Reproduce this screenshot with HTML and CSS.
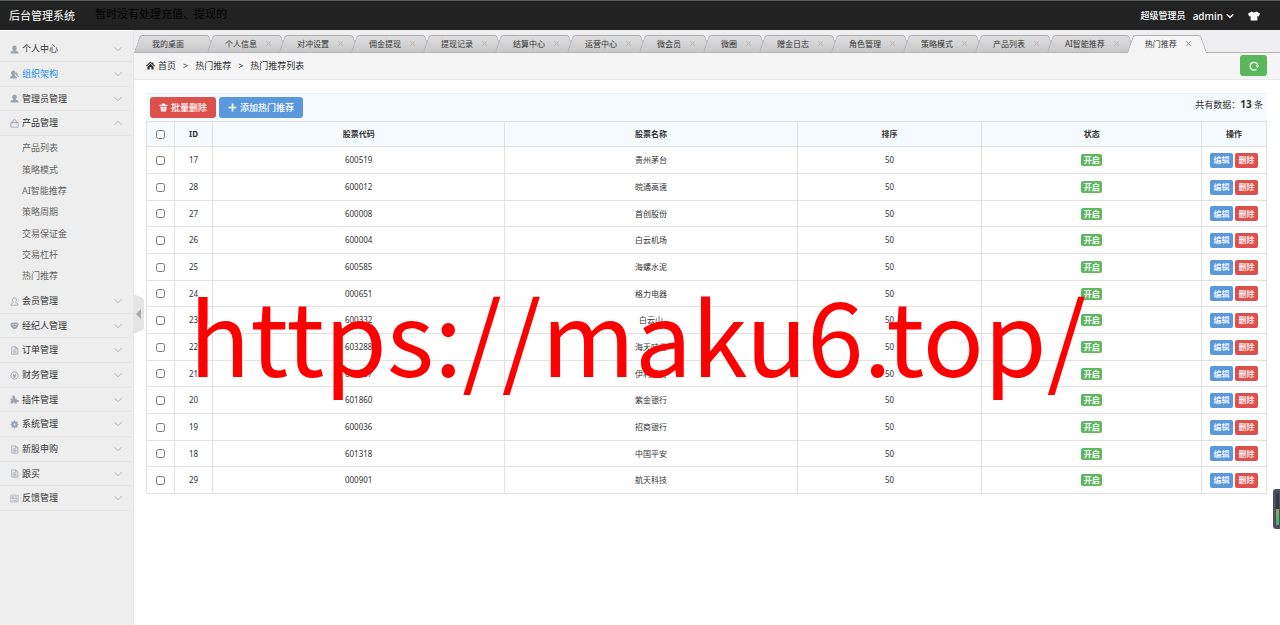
FILE: index.html
```html
<!DOCTYPE html>
<html lang="zh-CN">
<head>
<meta charset="utf-8">
<title>后台管理系统</title>
<link rel="stylesheet" href="styles.css">
</head>
<body>
<svg class="defs" aria-hidden="true">
  <symbol id="user" viewBox="0 0 16 16"><path d="M8 1c2.400 0 4 1.700 4 4.200 0 1.700-.8 3.200-2 4 .2 1 5 1.300 5 4.300V15H1v-1.500c0-3 4.800-3.300 5-4.300-1.200-.8-2-2.300-2-4C4 2.700 5.600 1 8 1z" fill="currentColor"/></symbol>
  <symbol id="team" viewBox="0 0 16 16"><path d="M6 1c2.400 0 4 1.700 4 4.200 0 1.700-.8 3.200-2 4 .2 1 4 1.300 4 4.300V15H0v-1.500c0-3 3.800-3.300 4-4.300-1.200-.8-2-2.300-2-4C2 2.700 3.600 1 6 1zM11 4a4 4 0 0 1 1.500 6.500L10 9zM13 9l3 2-2 2z" fill="currentColor"/></symbol>
  <symbol id="member" viewBox="0 0 16 16"><path d="M8 1.500c2 0 3.500 1.500 3.500 3.700 0 1.900-.9 3.200-2 4 0 1.500 5 1 5 5.300h-13c0-4.300 5-3.800 5-5.300-1.100-.8-2-2.100-2-4C4.500 3 6 1.500 8 1.500z" fill="none" stroke="currentColor" stroke-width="1.500"/></symbol>
  <symbol id="bag" viewBox="0 0 16 16"><path d="M1.500 6h13v8.500h-13zM5 8.500V4a3 3 0 0 1 6 0v4.500" fill="none" stroke="currentColor" stroke-width="1.500"/></symbol>
  <symbol id="broker" viewBox="0 0 16 16"><path d="M1 4q7-3 14 0v3c-1 4-3 7-7 7s-6-3-7-7z" fill="currentColor"/><path d="M3 6.500h4M9 6.500h4M6 10h4" stroke="#eee" stroke-width="1.200"/></symbol>
  <symbol id="doc" viewBox="0 0 16 16"><path d="M3 1.500h7l4 3.500v9.500H3zM10 1.500V5h4M5.500 7h5M5.500 9.500h6M5.500 12h6" fill="none" stroke="currentColor" stroke-width="1.400"/></symbol>
  <symbol id="coin" viewBox="0 0 16 16"><path d="M8 1.500a6.500 6.500 0 1 0 .1 0zM5 4.500l3 3.500 3-3.500M8 8v4.500M5 8h6M5 10.500h6" fill="none" stroke="currentColor" stroke-width="1.500"/></symbol>
  <symbol id="plugin" viewBox="0 0 16 16"><path d="M5 6c-2-3 0-5 1.500-5S10 3 8.500 6H12v3c3-1 4 .5 4 2s-2 2.500-4 1.500V15H8c.5-3-3-3-2.500 0H1v-4c2 0 2-2 0-2V6z" fill="currentColor"/></symbol>
  <symbol id="gear" viewBox="0 0 16 16"><path d="M8 1v14M1 8h14M3 3l10 10M13 3L3 13" stroke="currentColor" stroke-width="2.400"/><circle cx="8" cy="8" r="3.500" fill="#eee" stroke="currentColor" stroke-width="3.600"/></symbol>
  <symbol id="news" viewBox="0 0 16 16"><path d="M1.500 2h13v12h-13zM4 5h3v3H4zM9 5h3.500M9 8h3.500M4 11h8.500" fill="none" stroke="currentColor" stroke-width="1.300"/></symbol>
  <symbol id="down" viewBox="0 0 16 16"><path d="M1 4.500l7 7 7-7" fill="none" stroke="currentColor" stroke-width="2"/></symbol>
  <symbol id="caret" viewBox="0 0 16 16"><path d="M1.500 4.500l6.500 6.500 6.500-6.500" fill="none" stroke="currentColor" stroke-width="3"/></symbol>
  <symbol id="up" viewBox="0 0 16 16"><path d="M1 11.500l7-7 7 7" fill="none" stroke="currentColor" stroke-width="2"/></symbol>
  <symbol id="home" viewBox="0 0 16 16"><path d="M8 1L0 8.500l1.200 1.200L8 3.500l6.800 6.200L16 8.500l-3-2.800V2.500h-2v1.300zM2.500 10L8 5l5.500 5v5H9.500v-4h-3v4h-4z" fill="currentColor"/></symbol>
  <symbol id="trash" viewBox="0 0 16 16"><path d="M5.500 1h5v2H15v2.500H1V3h4.500zM2.500 6.500h11L12.500 15h-9z" fill="currentColor"/><path d="M6 8v5M8 8v5M10 8v5" stroke="#dd514c" stroke-width=".6"/></symbol>
  <symbol id="plus" viewBox="0 0 16 16"><path d="M8 1v14M1 8h14" stroke="currentColor" stroke-width="3"/></symbol>
  <symbol id="shirt" viewBox="0 0 16 16"><path d="M5 2q3 2.500 6 0l5 2.500L14.500 8.500 12.500 8v6h-9V8l-2 .5L0 4.500z" fill="currentColor"/></symbol>
  <symbol id="refresh" viewBox="0 0 16 16"><path d="M12 13A6.200 6.200 0 1 1 14 7" fill="none" stroke="currentColor" stroke-width="2"/><path d="M10.500 7H16l-2.300 4z" fill="currentColor"/></symbol>
  <symbol id="close" viewBox="0 0 16 16"><path d="M3 3l10 10M13 3L3 13" stroke="currentColor" stroke-width="2.200"/></symbol>
</svg>

<header class="topbar">
  <a class="brand" href="#">后台管理系统</a>
  <span class="notice">暂时没有处理充值、提现的</span>
  <div class="account">
    <span>超级管理员</span>
    <button class="plain" type="button">admin <svg class="i8"><use href="#caret"/></svg></button>
    <button class="plain skin" type="button" aria-label="换肤"><svg class="i12"><use href="#shirt"/></svg></button>
  </div>
</header>

<div class="shell">
  <aside class="sidebar">
    <nav>
      <ul class="menu">
        <li><a href="#"><svg><use href="#user"/></svg><span>个人中心</span><svg class="arrow"><use href="#down"/></svg></a></li>
        <li><a href="#" class="current"><svg><use href="#team"/></svg><span>组织架构</span><svg class="arrow"><use href="#down"/></svg></a></li>
        <li><a href="#"><svg><use href="#user"/></svg><span>管理员管理</span><svg class="arrow"><use href="#down"/></svg></a></li>
        <li><a href="#"><svg><use href="#bag"/></svg><span>产品管理</span><svg class="arrow"><use href="#up"/></svg></a>
          <ul class="submenu">
            <li><a href="#">产品列表</a></li>
            <li><a href="#">策略模式</a></li>
            <li><a href="#">AI智能推荐</a></li>
            <li><a href="#">策略周期</a></li>
            <li><a href="#">交易保证金</a></li>
            <li><a href="#">交易杠杆</a></li>
            <li><a href="#">热门推荐</a></li>
          </ul>
        </li>
        <li><a href="#"><svg><use href="#member"/></svg><span>会员管理</span><svg class="arrow"><use href="#down"/></svg></a></li>
        <li><a href="#"><svg><use href="#broker"/></svg><span>经纪人管理</span><svg class="arrow"><use href="#down"/></svg></a></li>
        <li><a href="#"><svg><use href="#doc"/></svg><span>订单管理</span><svg class="arrow"><use href="#down"/></svg></a></li>
        <li><a href="#"><svg><use href="#coin"/></svg><span>财务管理</span><svg class="arrow"><use href="#down"/></svg></a></li>
        <li><a href="#"><svg><use href="#plugin"/></svg><span>插件管理</span><svg class="arrow"><use href="#down"/></svg></a></li>
        <li><a href="#"><svg><use href="#gear"/></svg><span>系统管理</span><svg class="arrow"><use href="#down"/></svg></a></li>
        <li><a href="#"><svg><use href="#doc"/></svg><span>新股申购</span><svg class="arrow"><use href="#down"/></svg></a></li>
        <li><a href="#"><svg><use href="#doc"/></svg><span>跟买</span><svg class="arrow"><use href="#down"/></svg></a></li>
        <li><a href="#"><svg><use href="#news"/></svg><span>反馈管理</span><svg class="arrow"><use href="#down"/></svg></a></li>
      </ul>
    </nav>
    <button class="collapse" type="button" aria-label="收起菜单"><svg viewBox="0 0 11 40"><path d="M0 0l8 3q3 1 3 4v26q0 3-3 4l-8 3z" fill="#e4e4e4"/><path d="M8 15v10l-5-5z" fill="#aaa"/></svg></button>
  </aside>

  <main class="content">
    <ul class="tabs">
      <li class="first"><a href="#">我的桌面</a></li>
      <li><a href="#">个人信息</a><svg><use href="#close"/></svg></li>
      <li><a href="#">对冲设置</a><svg><use href="#close"/></svg></li>
      <li><a href="#">佣金提现</a><svg><use href="#close"/></svg></li>
      <li><a href="#">提现记录</a><svg><use href="#close"/></svg></li>
      <li><a href="#">结算中心</a><svg><use href="#close"/></svg></li>
      <li><a href="#">运营中心</a><svg><use href="#close"/></svg></li>
      <li><a href="#">微会员</a><svg><use href="#close"/></svg></li>
      <li><a href="#">微圈</a><svg><use href="#close"/></svg></li>
      <li><a href="#">赠金日志</a><svg><use href="#close"/></svg></li>
      <li><a href="#">角色管理</a><svg><use href="#close"/></svg></li>
      <li><a href="#">策略模式</a><svg><use href="#close"/></svg></li>
      <li><a href="#">产品列表</a><svg><use href="#close"/></svg></li>
      <li><a href="#">AI智能推荐</a><svg><use href="#close"/></svg></li>
      <li class="active"><a href="#">热门推荐</a><svg><use href="#close"/></svg></li>
    </ul>

    <div class="crumbs">
      <svg class="i9"><use href="#home"/></svg>
      <a href="#">首页</a><span class="sep">&gt;</span><span>热门推荐</span><span class="sep">&gt;</span><span>热门推荐列表</span>
      <button class="refresh" type="button" aria-label="刷新"><svg class="i10"><use href="#refresh"/></svg></button>
    </div>

    <section class="panel">
      <div class="toolbar">
        <button class="btn red" type="button"><svg class="i9"><use href="#trash"/></svg>批量删除</button>
        <button class="btn blue" type="button"><svg class="i9"><use href="#plus"/></svg>添加热门推荐</button>
        <span class="total">共有数据：<strong>13</strong> 条</span>
      </div>
      <table class="stocks">
        <colgroup><col class="c-check"><col class="c-id"><col class="c-code"><col class="c-name"><col class="c-sort"><col><col class="c-ops"></colgroup>
        <thead>
          <tr><th><input type="checkbox" aria-label="全选"></th><th>ID</th><th>股票代码</th><th>股票名称</th><th>排序</th><th>状态</th><th>操作</th></tr>
        </thead>
        <tbody>
          <tr><td><input type="checkbox" aria-label="选择 17"></td><td>17</td><td>600519</td><td>贵州茅台</td><td>50</td><td><span class="tag">开启</span></td><td><div class="ops"><button class="mini blue" type="button">编辑</button><button class="mini red" type="button">删除</button></div></td></tr>
          <tr><td><input type="checkbox" aria-label="选择 28"></td><td>28</td><td>600012</td><td>皖通高速</td><td>50</td><td><span class="tag">开启</span></td><td><div class="ops"><button class="mini blue" type="button">编辑</button><button class="mini red" type="button">删除</button></div></td></tr>
          <tr><td><input type="checkbox" aria-label="选择 27"></td><td>27</td><td>600008</td><td>首创股份</td><td>50</td><td><span class="tag">开启</span></td><td><div class="ops"><button class="mini blue" type="button">编辑</button><button class="mini red" type="button">删除</button></div></td></tr>
          <tr><td><input type="checkbox" aria-label="选择 26"></td><td>26</td><td>600004</td><td>白云机场</td><td>50</td><td><span class="tag">开启</span></td><td><div class="ops"><button class="mini blue" type="button">编辑</button><button class="mini red" type="button">删除</button></div></td></tr>
          <tr><td><input type="checkbox" aria-label="选择 25"></td><td>25</td><td>600585</td><td>海螺水泥</td><td>50</td><td><span class="tag">开启</span></td><td><div class="ops"><button class="mini blue" type="button">编辑</button><button class="mini red" type="button">删除</button></div></td></tr>
          <tr><td><input type="checkbox" aria-label="选择 24"></td><td>24</td><td>000651</td><td>格力电器</td><td>50</td><td><span class="tag">开启</span></td><td><div class="ops"><button class="mini blue" type="button">编辑</button><button class="mini red" type="button">删除</button></div></td></tr>
          <tr><td><input type="checkbox" aria-label="选择 23"></td><td>23</td><td>600332</td><td>白云山</td><td>50</td><td><span class="tag">开启</span></td><td><div class="ops"><button class="mini blue" type="button">编辑</button><button class="mini red" type="button">删除</button></div></td></tr>
          <tr><td><input type="checkbox" aria-label="选择 22"></td><td>22</td><td>603288</td><td>海天味业</td><td>50</td><td><span class="tag">开启</span></td><td><div class="ops"><button class="mini blue" type="button">编辑</button><button class="mini red" type="button">删除</button></div></td></tr>
          <tr><td><input type="checkbox" aria-label="选择 21"></td><td>21</td><td>600887</td><td>伊利股份</td><td>50</td><td><span class="tag">开启</span></td><td><div class="ops"><button class="mini blue" type="button">编辑</button><button class="mini red" type="button">删除</button></div></td></tr>
          <tr><td><input type="checkbox" aria-label="选择 20"></td><td>20</td><td>601860</td><td>紫金银行</td><td>50</td><td><span class="tag">开启</span></td><td><div class="ops"><button class="mini blue" type="button">编辑</button><button class="mini red" type="button">删除</button></div></td></tr>
          <tr><td><input type="checkbox" aria-label="选择 19"></td><td>19</td><td>600036</td><td>招商银行</td><td>50</td><td><span class="tag">开启</span></td><td><div class="ops"><button class="mini blue" type="button">编辑</button><button class="mini red" type="button">删除</button></div></td></tr>
          <tr><td><input type="checkbox" aria-label="选择 18"></td><td>18</td><td>601318</td><td>中国平安</td><td>50</td><td><span class="tag">开启</span></td><td><div class="ops"><button class="mini blue" type="button">编辑</button><button class="mini red" type="button">删除</button></div></td></tr>
          <tr><td><input type="checkbox" aria-label="选择 29"></td><td>29</td><td>000901</td><td>航天科技</td><td>50</td><td><span class="tag">开启</span></td><td><div class="ops"><button class="mini blue" type="button">编辑</button><button class="mini red" type="button">删除</button></div></td></tr>
        </tbody>
      </table>
    </section>
  </main>
</div>

<div class="watermark">https://maku6.top/</div>
<div class="meter"><span class="bar"></span></div>
</body>
</html>
```

FILE: styles.css
```css
* { box-sizing: border-box; }

body {
  margin: 0;
  min-height: 100vh;
  display: flex;
  flex-direction: column;
  background: #fff;
  color: #333;
  font: 9px/16px "Noto Sans", "Noto Sans CJK SC", sans-serif;
  overflow: hidden;
}

a { color: inherit; text-decoration: none; }
ul { list-style: none; margin: 0; padding: 0; }
button { border: 0; padding: 0; font: inherit; color: inherit; background: none; cursor: pointer; }
svg { display: block; flex: none; }
.defs { position: absolute; width: 0; height: 0; }
.i8 { width: 8px; height: 8px; }
.i9 { width: 9px; height: 9px; }
.i10 { width: 10px; height: 10px; }
.i12 { width: 12px; height: 12px; }

/* Top bar */
.topbar {
  display: flex;
  align-items: center;
  height: 30px;
  padding: 0 20px 0 9px;
  border-top: 1px solid #555957;
  background: #222;
  color: #fff;
}
.brand { font-size: 11px; }
.notice { margin-left: 20px; padding-bottom: 4px; font-size: 11px; color: #000; }
.account { display: flex; align-items: center; margin-left: auto; font-size: 10px; font-weight: 500; }
.account span { font-size: 9px; }
.plain { display: flex; align-items: center; gap: 3px; margin-left: 7px; }
.skin { margin-left: 14px; }

.shell { display: flex; flex: 1; }

/* Sidebar */
.sidebar {
  position: relative;
  flex: none;
  width: 134px;
  padding-top: 6px;
  border-top: 1px solid #fff;
  border-right: 1px solid #e6e6e6;
  background: #eee;
}
.menu > li:nth-child(3n) > a { height: 24px; }
.menu > li > a {
  display: flex;
  align-items: center;
  gap: 3px;
  height: 25px;
  padding: 0 11px 0 10px;
  border-bottom: 1px solid #e5e5e5;
}
.menu svg { width: 9px; height: 9px; color: #9ba4b0; }
.menu .arrow { width: 8px; height: 8px; margin-left: auto; color: #b5b5b5; }
.menu .current { color: #148cf1; }
.submenu { padding: 1px 0 2px 22px; color: #666; }
.submenu a { display: block; line-height: 21px; }
.submenu li:nth-child(3n+1) a { line-height: 22px; }
.collapse { position: absolute; left: 100%; top: 263px; width: 11px; height: 40px; }

/* Page tabs */
.content { flex: 1; min-width: 0; }
.tabs {
  display: flex;
  height: 23px;
  padding-top: 5px;
  border-bottom: 1px solid #b4b4b6;
  background: #efeef0;
  font-size: 8px;
}
.tabs li {
  position: relative;
  display: flex;
  align-items: center;
  gap: 8px;
  height: 17px;
  padding: 0 15px 0 18px;
  margin-right: -8px;
  color: #333;
}
.tabs .first { padding-right: 31px; }
.tabs li::before,
.tabs li::after {
  content: "";
  position: absolute;
  top: 0;
  bottom: 0;
  border-top: 1px solid #aeaeb0;
  background: linear-gradient(#dedede, #c8c8ca);
}
.tabs li::before { left: 3px; right: 35%; border-left: 1px solid #aeaeb0; border-top-left-radius: 3px; transform: skewX(-19deg); }
.tabs li::after { right: 3px; left: 35%; border-right: 1px solid #aeaeb0; border-top-right-radius: 3px; transform: skewX(19deg); }
.tabs a, .tabs svg { position: relative; z-index: 1; }
.tabs svg { width: 7px; height: 7px; color: #b4b4b4; }
.tabs .active { z-index: 2; height: 18px; padding-bottom: 1px; }
.tabs .active::before, .tabs .active::after { background: #f5f5f5; }
.tabs .active svg { color: #888; }

/* Breadcrumb */
.crumbs {
  display: flex;
  align-items: center;
  gap: 3px;
  height: 27px;
  padding: 0 13px 1px 12px;
  border-bottom: 1px solid #e9e9e9;
  background: #f5f5f5;
}
.sep { margin: 0 4px; }
.refresh {
  display: grid;
  place-items: center;
  width: 27px;
  height: 21px;
  margin-left: auto;
  border-radius: 3px;
  background: #5bb75b;
  color: #fff;
}

/* List panel */
.panel { margin: 13px 13px 0 12px; }
.toolbar {
  display: flex;
  align-items: center;
  gap: 3px;
  height: 28px;
  padding: 0 4px;
  border-top: 1px solid #eaeef0;
  background: #f5fafe;
}
.btn {
  display: flex;
  align-items: center;
  gap: 3px;
  height: 21px;
  padding: 0 9px;
  border-radius: 3px;
  font-weight: 500;
  color: #fff;
}
.red { background: #dd514c; }
.blue { background: #5a98de; }
.total { margin-left: auto; padding-bottom: 6px; }
.total strong { font-size: 10px; }

.stocks {
  width: 100%;
  table-layout: fixed;
  border-collapse: collapse;
  font-size: 8px;
  line-height: 12px;
  text-align: center;
}
.c-check { width: 28px; }
.c-id { width: 38px; }
.c-code, .c-name { width: 26.1%; }
.c-sort { width: 16.5%; }
.c-ops { width: 65px; }
.stocks th, .stocks td { padding: 0; border: 1px solid #e1e1e1; }
.stocks th { height: 25px; background: #f5fafe; }
.stocks td { height: 27px; }
.stocks tr:nth-child(3n) td { height: 26px; }
.stocks input { display: block; width: 9px; height: 9px; margin: 0 auto; }
.tag {
  display: inline-block;
  min-width: 21px;
  border-radius: 2px;
  background: #5eb95e;
  color: #fff;
  font-weight: 700;
  vertical-align: middle;
}
.ops { display: flex; justify-content: center; gap: 2px; }
.mini { min-width: 23px; height: 15px; border-radius: 2px; color: #fff; line-height: 12px; font-weight: 500; }

/* Overlays */
.watermark {
  position: absolute;
  left: 189px;
  top: 283px;
  color: #f00;
  font: 101px/101px "Noto Sans CJK SC", sans-serif;
  white-space: nowrap;
  pointer-events: none;
}
.meter {
  position: absolute;
  right: 0;
  top: 489px;
  width: 7px;
  height: 40px;
  padding: 4px 1px 4px 3px;
  border-radius: 3px 0 0 3px;
  background: #4b4f5e;
}
.bar { display: block; height: 100%; background: linear-gradient(#353945 50%, #9aa35a 50%, #3fb573); }
```
